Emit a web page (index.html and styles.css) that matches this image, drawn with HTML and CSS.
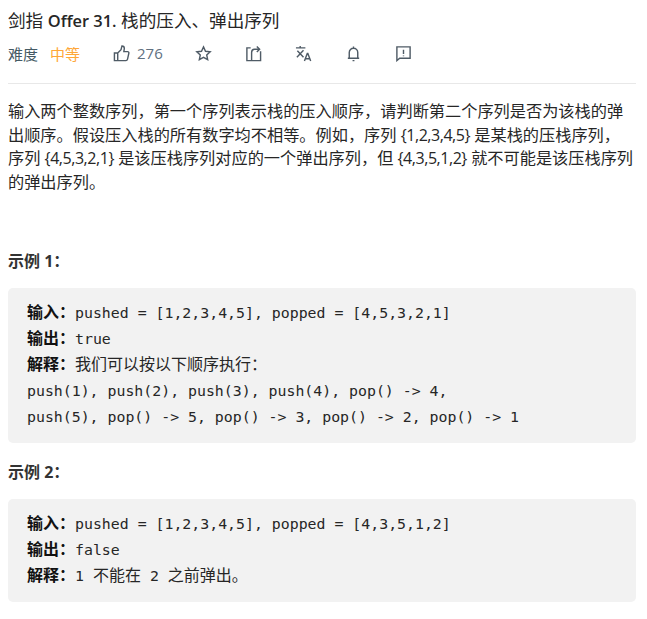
FILE: index.html
```html
<!DOCTYPE html>
<html lang="zh">
<head>
    <meta charset="UTF-8">
    <title>剑指 Offer 31. 栈的压入、弹出序列</title>
    <link rel="stylesheet" href="styles.css">
</head>
<body>
    <div class="container">
        <h1>剑指 <span class="title-en">Offer 31.</span> 栈的压入、弹出序列</h1>
        <div class="meta">
            <span class="meta-label">难度</span>
            <span class="level">中等</span>
            <span class="like">
                <svg class="icon" viewBox="0 0 18 18"><path d="M1.500 8.500h3.500v8h-3.500zM5 8.500l3.500-3.500 1-4c1.600 0 2.500 1.200 2.500 2.600l-.5 3.400h4c.9 0 1.500.8 1.300 1.700l-1.400 6.200c-.2.8-.8 1.600-1.700 1.600h-8.700"/></svg>
                <span>276</span>
            </span>
            <svg class="icon star" viewBox="0 0 18 18"><path d="M9 2l2.100 4.600 5 .6-3.700 3.400 1 5-4.400-2.500-4.400 2.500 1-5-3.700-3.400 5-.6z"/></svg>
            <svg class="icon share" viewBox="0 0 18 18"><path d="M6 3h-4v13.500h14.500v-10M7 16v-8c0-2 1-3.500 3-3.500h5M12.500 1.500l3 3-3 3"/></svg>
            <svg class="icon translate" viewBox="0 0 18 18"><path d="M1 3h10M5.500 1v2M2.500 6l6.500 7M9 5.500l-7 7.500M10 17l3-8h.6l3 8M11 14.500h4.600"/></svg>
            <svg class="icon bell" viewBox="0 0 18 18"><path d="M3 14h12M4.500 14v-6c0-2.600 2-4.500 4.500-4.500s4.500 1.900 4.500 4.500v6M9 1.500v2M8 16.500h2"/></svg>
            <svg class="icon report" viewBox="0 0 18 18"><path d="M2 2h14v12h-11l-3 2.500zM9 5v4.500M9 11v1"/></svg>
        </div>
        <hr class="divider">
        <p class="desc">输入两个整数序列，第一个序列表示栈的压入顺序，请判断第二个序列是否为该栈的弹出顺序。假设压入栈的所有数字均不相等。例如，序列 <span class="num">{1,2,3,4,5}</span> 是某栈的压栈序列，<br>序列 <span class="num">{4,5,3,2,1}</span> 是该压栈序列对应的一个弹出序列，但 <span class="num">{4,3,5,1,2}</span> 就不可能是该压栈序列<br>的弹出序列。</p>

        <h3 class="example-title first">示例 1：</h3>
        <pre class="code"><b>输入：</b>pushed = [1,2,3,4,5], popped = [4,5,3,2,1]
<b>输出：</b>true
<b>解释：</b><span class="cjk">我们可以按以下顺序执行：</span>
push(1), push(2), push(3), push(4), pop() -&gt; 4,
push(5), pop() -&gt; 5, pop() -&gt; 3, pop() -&gt; 2, pop() -&gt; 1</pre>

        <h3 class="example-title">示例 2：</h3>
        <pre class="code"><b>输入：</b>pushed = [1,2,3,4,5], popped = [4,3,5,1,2]
<b>输出：</b>false
<b>解释：</b>1 <span class="cjk">不能在</span> 2 <span class="cjk">之前弹出。</span></pre>
    </div>
</body>
</html>
```

FILE: styles.css
```css
* {
    margin: 0;
    padding: 0;
    box-sizing: border-box;
}

body {
    background: #fff;
    font-family: "Open Sans", "Noto Sans CJK SC", sans-serif;
    color: #262626;
    overflow: hidden;
}

.container {
    padding: 7px 11px 0 8px;
}

h1 {
    font-size: 17.6px;
    font-weight: 400;
    line-height: 26px;
    color: #262626;
}

.title-en {
    font-size: 16.4px;
    font-weight: 600;
    line-height: 1;
}

.meta {
    display: flex;
    align-items: center;
    height: 24px;
    margin-top: 8px;
    font-size: 15px;
    color: #546e7a;
}

.meta-label {
    color: #455a64;
}

.level {
    margin-left: 12px;
    color: #ffa738;
}

.like {
    display: flex;
    align-items: center;
    gap: 7px;
    margin-left: 33px;
    color: #607080;
}

.icon {
    width: 17px;
    height: 17px;
    fill: none;
    stroke: #4f5b66;
    stroke-width: 1.5;
}

.star {
    margin-left: 32px;
}

.share {
    margin-left: 33px;
}

.translate {
    margin-left: 33px;
}

.bell {
    margin-left: 33px;
}

.report {
    margin-left: 33px;
}

.divider {
    border: none;
    border-top: 1px solid #e8e8e8;
    margin-top: 18px;
}

.desc {
    margin-top: 16px;
    margin-right: -3px;
    font-size: 16.2px;
    line-height: 23.5px;
}

.num {
    font-size: 16px;
    letter-spacing: -0.45px;
    line-height: 1;
}

.example-title {
    font-size: 16px;
    font-weight: 700;
    line-height: 24px;
    margin-top: 17px;
    color: #333;
}

.example-title.first {
    margin-top: 55px;
}

.code {
    margin-top: 15px;
    padding: 12px 19px 13px;
    background: #f2f2f2;
    border-radius: 5px;
    font-family: "DejaVu Sans Mono", "Noto Sans CJK SC", monospace;
    font-size: 14.86px;
    line-height: 26px;
    color: #262626;
    white-space: pre;
}

.code b {
    font-family: "Open Sans", "Noto Sans CJK SC", sans-serif;
    font-size: 16px;
    line-height: 1;
    color: #111;
}

.cjk {
    font-size: 16px;
    line-height: 1;
}
```
